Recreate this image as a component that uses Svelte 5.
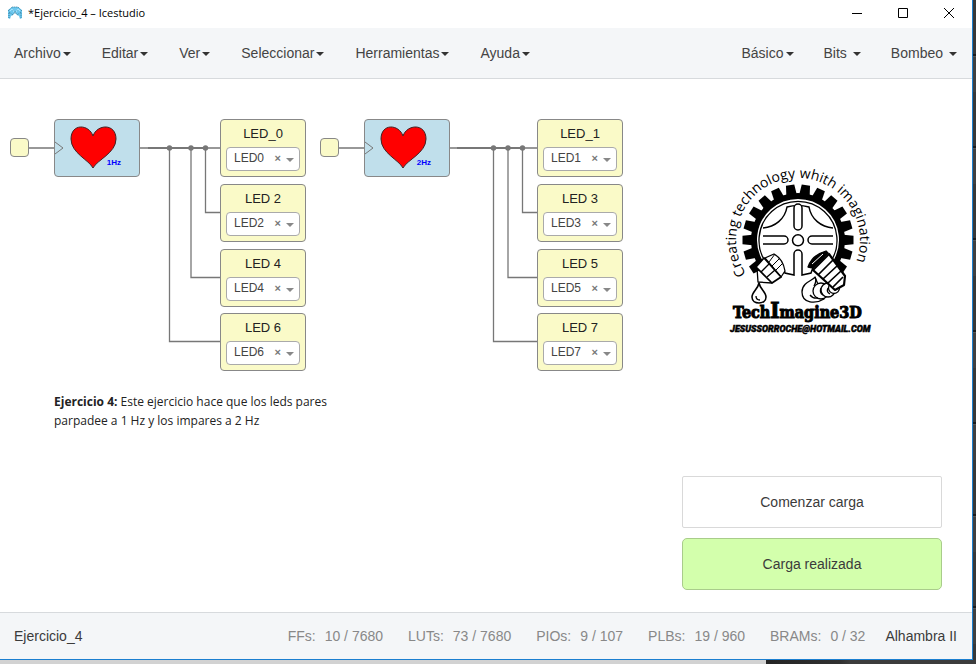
<script>
  const mainMenus = ['Archivo', 'Editar', 'Ver', 'Seleccionar', 'Herramientas', 'Ayuda'];
  const blockMenus = ['Básico', 'Bits', 'Bombeo'];

  const resources = [
    { name: 'FFs', value: '10 / 7680' },
    { name: 'LUTs', value: '73 / 7680' },
    { name: 'PIOs', value: '9 / 107' },
    { name: 'PLBs', value: '19 / 960' },
    { name: 'BRAMs', value: '0 / 32' }
  ];

  const rows = [40, 105, 170, 234];
  const circuits = [
    { x: 10, rate: '1Hz', ledX: 220, busX: 148, taps: [205.5, 191, 169.5], leds: ['LED_0', 'LED 2', 'LED 4', 'LED 6'], pins: ['LED0', 'LED2', 'LED4', 'LED6'] },
    { x: 320, rate: '2Hz', ledX: 537, busX: 457, taps: [522.5, 508, 493.5], leds: ['LED_1', 'LED 3', 'LED 5', 'LED 7'], pins: ['LED1', 'LED3', 'LED5', 'LED7'] }
  ];
  const pinNames = ['LED0', 'LED1', 'LED2', 'LED3', 'LED4', 'LED5', 'LED6', 'LED7'];

  let selected = $state(circuits.map((c) => [...c.pins]));

  // gear teeth, measured in degrees from the top of the wheel
  const teeth = Array.from({ length: 16 }, (_, i) => (i - 7.5) * 16.36);
</script>

{#snippet caret()}
  <svg class="caret" width="8" height="4" viewBox="0 0 8 4" aria-hidden="true"><path d="M0 0h8L4 4z" fill="currentColor" /></svg>
{/snippet}

<div class="desktop">
  <div class="window">
    <header class="titlebar">
      <svg width="16" height="14" viewBox="0 0 16 14" aria-hidden="true">
        <path d="M1 4 5 1h6l4 3v8l-2 1-1-3-2-1-2-3-2 3-2 1-1 3-2-1z" fill="#6cc7ee" />
        <path d="M1 5 5 1h6l4 4M2 12V6l4 3 2-3 2 3 4-3v6M5 4l3 2 3-2" fill="none" stroke="#397f9e" stroke-dasharray="1 1" />
        <path d="m3 5 2-2 2 3M9 6l2-3 2 2" fill="none" stroke="#a9e7ff" />
      </svg>
      <h1>*Ejercicio_4 – Icestudio</h1>
      <div class="controls">
        <button aria-label="Minimizar"><svg width="12" height="12"><path d="M1 6.500h10" /></svg></button>
        <button aria-label="Maximizar"><svg width="12" height="12"><path d="M1.500 1.500h9v9h-9z" /></svg></button>
        <button aria-label="Cerrar"><svg width="12" height="12"><path d="m1 1 10 10M11 1 1 11" /></svg></button>
      </div>
    </header>

    <nav class="menubar">
      <div class="menus main">
        {#each mainMenus as item}
          <button>{item}{@render caret()}</button>
        {/each}
      </div>
      <div class="menus collections">
        {#each blockMenus as item}
          <button>{item}{@render caret()}</button>
        {/each}
      </div>
    </nav>

    <main class="canvas">
      <svg class="wires" aria-hidden="true">
        {#each circuits as c}
          <path d="M{c.x + 19} 69H{c.x + 44}M{c.x + 130} 69H{c.ledX}" class="thin" />
          <path d="M{c.busX} 69H{c.taps[0]}" class="bus" />
          {#each c.taps as tap, i}
            <path d="M{tap} 69V{rows[i + 1] + 28.5}H{c.ledX}" class="thin" />
            <circle cx={tap} cy="69" r="2.7" />
          {/each}
        {/each}
      </svg>

      {#each circuits as c, n}
        <div class="port" style:left="{c.x}px"></div>
        <div class="block" style:left="{c.x + 44}px">
          <svg width="84" height="56" viewBox="1 1 84 56" aria-hidden="true">
            <path d="m1 23 8 6-8 6" fill="none" stroke="#777" />
            <path d="M39 49C35 41 17 34 17 20C17 4 35 5 39 17C43 5 62 4 62 20C62 34 43 41 39 49Z" fill="red" stroke="#422" />
          </svg>
          <span>{c.rate}</span>
        </div>
        {#each c.leds as led, i}
          <div class="led" style:left="{c.ledX}px" style:top="{rows[i]}px">
            <label for="pin-{n}-{i}">{led}</label>
            <div class="pin">
              <select id="pin-{n}-{i}" bind:value={selected[n][i]}>
                <option value=""></option>
                {#each pinNames as pin}<option value={pin}>{pin}</option>{/each}
              </select>
              <button aria-label="Quitar pin" onclick={() => (selected[n][i] = '')}>×</button>
              {@render caret()}
            </div>
          </div>
        {/each}
      {/each}

      <p class="note"><strong>Ejercicio 4:</strong> Este ejercicio hace que los leds pares parpadee a 1 Hz y los impares a 2 Hz</p>

      <svg class="logo" width="150" height="174" viewBox="724 164 150 174">
        <defs><path id="slogan" d="M746 273.800A62 62 0 1 1 850 273.800" /></defs>
        <text class="slogan"><textPath href="#slogan">Creating technology whith imagination</textPath></text>
        {#each teeth as angle}
          <path d="M792.500 197l1.300-12.500h8.400l1.300 12.500z" transform="rotate({angle} 798 240)" />
        {/each}
        <path d="M762 265.200A44 44 0 1 1 834 265.200" fill="none" stroke="#000" stroke-width="6" />
        <path d="M767 264A39 39 0 1 1 829 264" fill="none" stroke="#000" stroke-width="1.300" />
        <g fill="#fff" stroke="#000" stroke-width="1.500">
          <path d="M763 228C775 227 785 219 787 207Q798 204 809 207C811 219 821 227 833 228" fill="none" />
          <path d="M771 258Q782 261 785 273L794 275V254a4 4 0 0 1 8 0V275L811 273Q814 261 825 258" />
          <rect x="794" y="204" width="8" height="26" rx="4" />
          <path d="M763 236H784a4 4 0 0 1 0 8H763M833 236H812a4 4 0 0 0 0 8H833" />
          <circle cx="798" cy="240.300" r="5.500" />
        </g>
        <g fill="#fff" stroke="#000" stroke-width="1.300" stroke-linejoin="round">
          <path d="m765 258 9-4q9 5 11 17l-4 6z" />
          <path d="m769 262 6-8m-3 12 8-8m-4 12 7-7" fill="none" stroke-width="1" />
          <path d="m756 267 8-9 17 19-9 6z" stroke-width="1.700" />
          <path d="m761 272 8-8m-2 13 8-7M757 268l1 14 14 1" fill="none" />
          <path d="M759 283c-1 6-7 9-7 14 0 8 14 8 14 0 0-5-6-8-7-14z" stroke-width="1.600" />
          <path d="M756 296q0 4 4 4" fill="none" />

          <path d="M815 277c-1 3-13 5-13 15 0 12 14 12 22 7z" />
          <circle cx="821" cy="291" r="8" />
          <circle cx="828" cy="290" r="7" />
          <circle cx="834" cy="288" r="5.500" />
          <path d="M815 277q2 4-1 9m4 12q-5 1-8-3m13 0q-4-2-2-7m9 6q-4-2-2-6" fill="none" />
          <path d="m813 270 16-16 16 22-1 9-9 5z" stroke-width="2.200" />
          <path d="m818 275 15-15m-10 19 14-13m-9 17 13-12m-8 16 10-10" fill="none" stroke-width="1.700" />
          <path d="m808 267q4-12 18-16l2 2-15 15z" fill="#000" />
          <path d="m812 264 11-10" fill="none" stroke="#fff" stroke-width="1" />
        </g>
        <text class="brand" x="733" y="318">Tech<tspan>I</tspan>magine3D</text>
        <text class="mail" x="730" y="332">JESUSSORROCHE@HOTMAIL.COM</text>
      </svg>

      <div class="toasts">
        <div class="toast" role="status">Comenzar carga</div>
        <div class="toast success" role="status">Carga realizada</div>
      </div>
    </main>

    <footer>
      <span class="project">Ejercicio_4</span>
      {#each resources as r}
        <span class="resource"><span>{r.name}:</span><span>{r.value}</span></span>
      {/each}
      <span class="board">Alhambra II</span>
    </footer>
  </div>
</div>

<style>
  .desktop {
    box-sizing: border-box;
    min-height: 100vh;
    padding: 0 3px 4px 0;
    display: flex;
    background:
      linear-gradient(90deg, #d2d2d2 766px, #242424 766px, #303030 840px, #3c3c3c 850px) bottom / 100% 4px no-repeat,
      repeating-linear-gradient(#373839 0 54px, #191a1b 54px 56px, #555 56px 57px, #3f4041 57px 92px);
    font: 14px/20px "Liberation Sans", Arial, sans-serif;
    color: #3b3b3b;
  }
  .window {
    flex: 1;
    display: flex;
    flex-direction: column;
    border: solid #1b7fd0;
    border-width: 0 1px 1px 0;
    background: #fff;
  }
  button {
    padding: 0;
    border: 0;
    background: none;
    font: inherit;
    color: inherit;
  }

  .titlebar {
    box-sizing: border-box;
    height: 28px;
    padding: 0 0 3px 7px;
    display: flex;
    align-items: center;
    gap: 5px;
    color: #000;
  }
  h1 {
    margin: 0 auto 0 0;
    font: 11px/20px "Open Sans", sans-serif;
  }
  .controls { display: flex; }
  .controls button { width: 46px; height: 24px; }
  .controls svg { display: block; margin: auto; }
  .controls path { fill: none; stroke: #000; }

  .menubar {
    height: 50px;
    padding: 0 15px 0 14px;
    display: flex;
    align-items: center;
    justify-content: space-between;
    background: #f4f6f8;
    border-bottom: 1px solid #d7dadd;
  }
  .menus { display: flex; gap: 30px; }
  .main { gap: 31px; }
  .menus button {
    display: flex;
    align-items: center;
    gap: 2px;
    color: #444;
  }
  .menus .caret { margin-top: 2px; color: #333; }
  .collections button:not(:first-child) { gap: 6px; }

  .canvas {
    position: relative;
    flex: 1;
    overflow: hidden;
  }
  .wires { position: absolute; inset: 0; width: 100%; height: 100%; }
  .wires path { fill: none; stroke: #777; }
  .wires .thin { stroke-width: 1.3; }
  .wires .bus { stroke-width: 2; }
  .wires circle { fill: #777; }

  .port, .block, .led {
    position: absolute;
    box-sizing: border-box;
    border: 1px solid #888;
    border-radius: 4px;
    background: #fafac8;
  }
  .port { top: 59px; width: 19px; height: 19px; }
  .block { top: 40px; width: 86px; height: 58px; background: #c0dfeb; }
  .block span {
    position: absolute;
    right: 18px;
    bottom: 7px;
    font: bold 8px/12px "Liberation Sans", Arial, sans-serif;
    color: #00f;
  }
  .led {
    width: 86px;
    height: 58px;
    padding: 4px 5px;
    color: #222;
  }
  .led label {
    display: block;
    font-size: 13px;
    text-align: center;
  }
  .pin { position: relative; margin-top: 3px; }
  .pin select {
    display: block;
    appearance: none;
    width: 100%;
    height: 24px;
    padding: 0 7px 2px;
    border: 1px solid #aaa;
    border-radius: 4px;
    background: #fff;
    font: 12px/20px "Liberation Sans", Arial, sans-serif;
    color: #444;
  }
  .pin button {
    position: absolute;
    right: 19px;
    top: 1px;
    font-size: 11px;
    font-weight: bold;
    color: #777;
  }
  .pin .caret {
    position: absolute;
    right: 6px;
    top: 11px;
    color: #888;
    pointer-events: none;
  }

  .note {
    position: absolute;
    left: 54px;
    top: 313px;
    width: 290px;
    margin: 0;
    font: 12px/19px "Open Sans", sans-serif;
    color: #222;
  }

  .logo { position: absolute; left: 724px; top: 85px; overflow: visible; }
  .slogan { font: 14px "Open Sans", sans-serif; }
  .brand { font: bold 16px "DejaVu Serif Condensed", "DejaVu Serif", serif; stroke: #000; stroke-width: 1px; }
  .brand tspan { font-size: 22px; }
  .mail { font: italic 900 9px Roboto, sans-serif; stroke: #000; stroke-width: 0.5px; }

  .toasts {
    position: absolute;
    right: 30px;
    bottom: 22px;
    width: 260px;
    display: grid;
    gap: 10px;
  }
  .toast {
    padding: 15px;
    border: 1px solid #d9d9d9;
    border-radius: 2px;
    background: #fff;
    text-align: center;
  }
  .success {
    border-color: #a9cc8b;
    border-radius: 5px;
    background: #d3ffac;
  }

  footer {
    height: 46px;
    padding: 0 15px 0 14px;
    display: flex;
    align-items: center;
    gap: 25px;
    background: #f4f6f8;
    border-top: 1px solid #d7dadd;
  }
  .project { margin-right: auto; }
  .resource { display: flex; gap: 9px; color: #888; }
  .board { margin-left: -5px; }
</style>
